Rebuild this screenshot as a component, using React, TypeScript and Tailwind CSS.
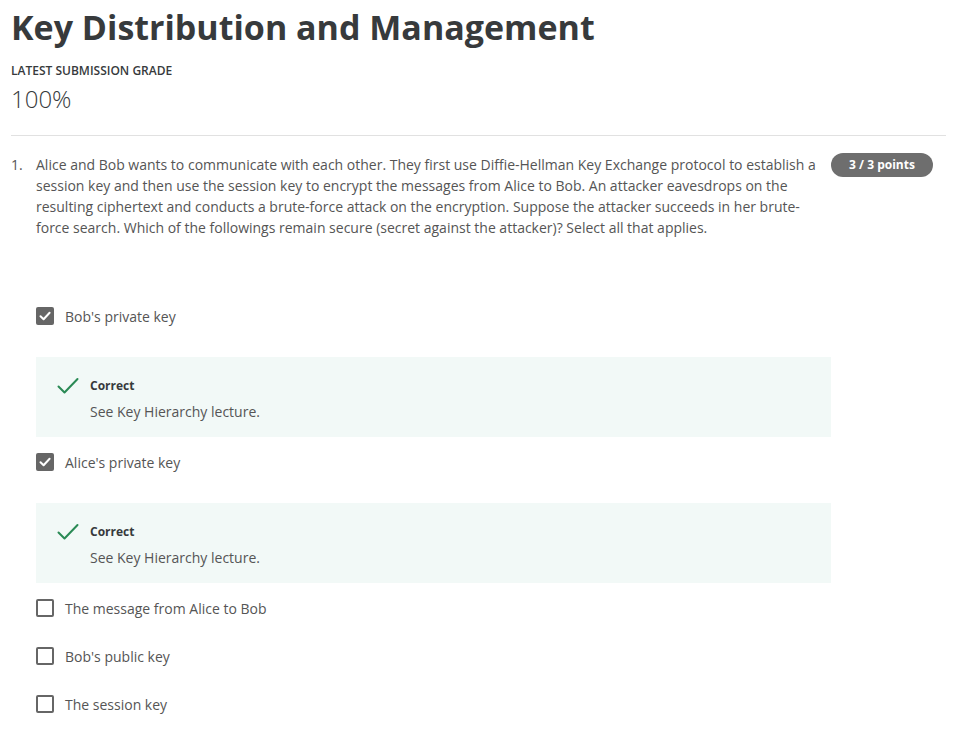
import React from 'react';

interface Option {
  label: string;
  checked: boolean;
  feedback?: string;
}

const options: Option[] = [
  { label: "Bob's private key", checked: true, feedback: 'See Key Hierarchy lecture.' },
  { label: "Alice's private key", checked: true, feedback: 'See Key Hierarchy lecture.' },
  { label: 'The message from Alice to Bob', checked: false },
  { label: "Bob's public key", checked: false },
  { label: 'The session key', checked: false },
];

const Checkbox: React.FC<{ checked: boolean }> = ({ checked }) =>
  checked ? (
    <div className="w-[18px] h-[18px] rounded-[2px] bg-[#666666] flex items-center justify-center">
      <svg width="14" height="14" viewBox="0 0 14 14" fill="none">
        <path d="M2.5 7.2 L5.6 10.2 L11.6 3.8" stroke="white" strokeWidth="2" strokeLinecap="round" strokeLinejoin="round" />
      </svg>
    </div>
  ) : (
    <div className="w-[18px] h-[18px] rounded-[2px] border-2 border-[#666666] bg-white" />
  );

export default function App() {
  return (
    <div className="min-h-screen bg-white px-[11px] pt-[3px] text-[#373a3c]" style={{ fontFamily: '"Open Sans", "Noto Sans", sans-serif' }}>
      {/* Header */}
      <h1 className="text-[34px] leading-[48px] font-bold text-[#373a3c]">Key Distribution and Management</h1>
      <div className="mt-[12px] text-[12px] leading-[16px] font-semibold uppercase text-[#373a3c]">Latest Submission Grade</div>
      <div className="mt-[4px] text-[24px] leading-[32px] font-light text-[#373a3c]">100%</div>
      <div className="mt-[20px] mr-[2px] border-b border-[#e1e1e1]" />

      {/* Question */}
      <div className="flex items-start mt-[18px]">
        <div className="w-[25px] text-[14px] leading-[21px] text-[#555555]">1.</div>
        <div className="w-[786px] text-[14px] leading-[21px] text-[#555555]">
          Alice and Bob wants to communicate with each other. They first use Diffie-Hellman Key Exchange protocol to establish a session key and then use the session key to encrypt the messages from Alice to Bob. An attacker eavesdrops on the resulting ciphertext and conducts a brute-force attack on the encryption. Suppose the attacker succeeds in her brute-force search. Which of the followings remain secure (secret against the attacker)? Select all that applies.
        </div>
        <div className="ml-[9px] mt-[-1px] w-[102px] h-[24px] rounded-full bg-[#6e6e6e] text-white text-[12px] font-bold flex items-center justify-center">
          3 / 3 points
        </div>
      </div>

      {/* Options */}
      <div className="ml-[25px] mt-[54px] w-[795px]">
        {options.map((opt) => (
          <div key={opt.label}>
            <div className="h-12 flex items-center gap-[11px]">
              <Checkbox checked={opt.checked} />
              <span className="text-[14px] text-[#555555]">{opt.label}</span>
            </div>
            {opt.feedback && (
              <div className="mt-[17px] mb-[1px] h-[80px] bg-[#f2f9f7] flex items-start pl-[21px] pt-[21px]">
                <svg width="22" height="18" viewBox="0 0 22 18" fill="none" className="mt-[-1px]">
                  <path d="M1.5 9.5 L7.5 15.5 L20.5 2" stroke="#2a8a55" strokeWidth="2" strokeLinecap="round" strokeLinejoin="round" />
                </svg>
                <div className="ml-[11px]">
                  <div className="text-[12px] leading-[16px] font-bold text-[#373a3c]">Correct</div>
                  <div className="mt-[8px] text-[14px] leading-[20px] text-[#555555]">{opt.feedback}</div>
                </div>
              </div>
            )}
          </div>
        ))}
      </div>
    </div>
  );
}
